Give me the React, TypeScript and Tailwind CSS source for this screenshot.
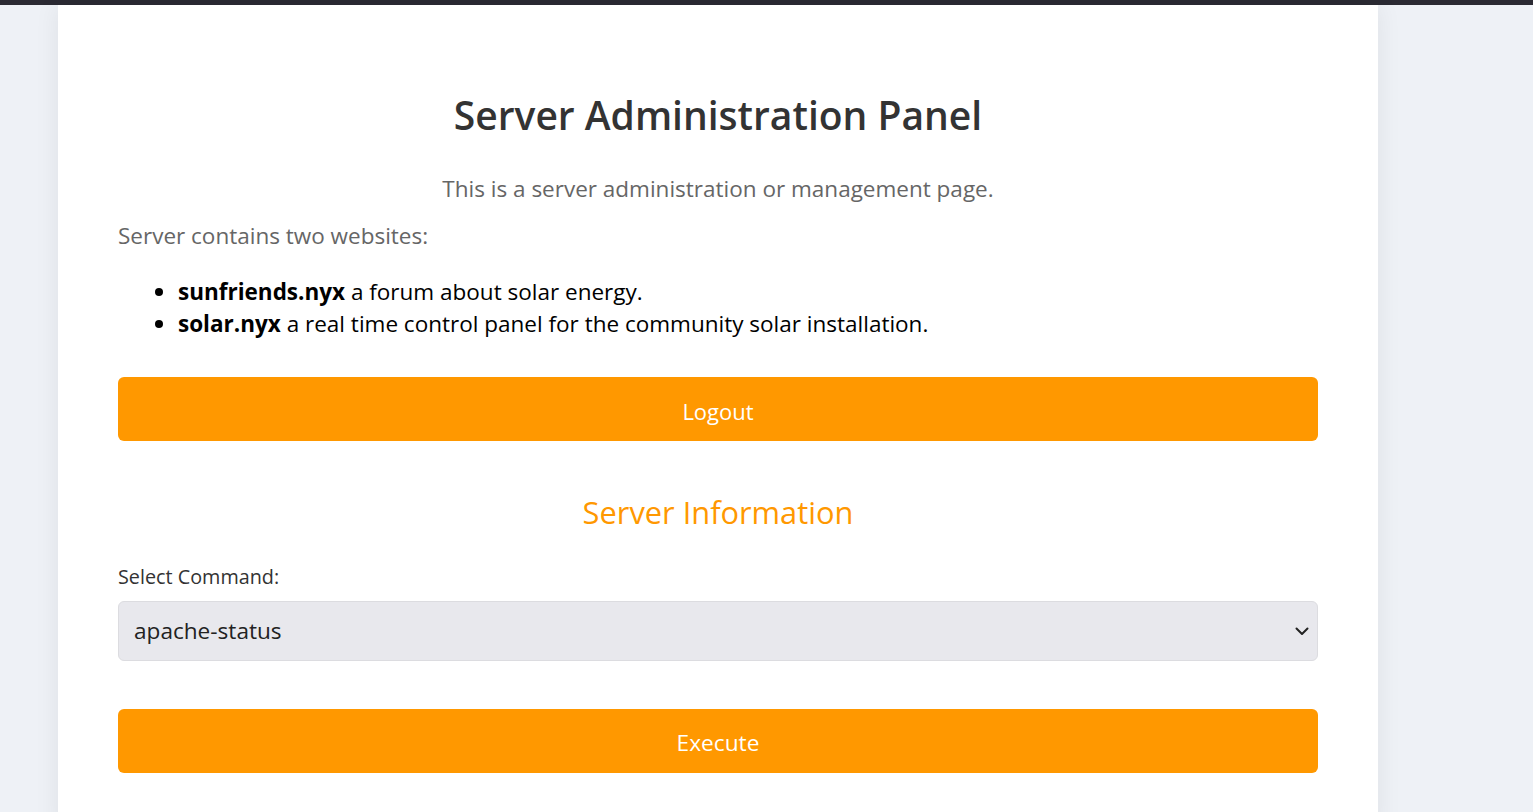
import React from "react";

export default function App() {
  return (
    <div className="min-h-screen bg-[#eef1f6]" style={{ fontFamily: '"Open Sans", "Noto Sans", sans-serif' }}>
      <div className="h-[5px] bg-[#2b2a33]" />
      <div className="ml-[58px] w-[1320px] bg-white px-[60px] pt-[86px] pb-[60px] shadow-[0_0_24px_rgba(0,0,0,0.07)] min-h-[807px]">
        <h1 className="text-center text-[39px] leading-[48px] font-semibold text-[#333333]">Server Administration Panel</h1>
        <p className="mt-[35px] text-center text-[22.5px] leading-[30px] text-[#666666]">This is a server administration or management page.</p>
        <p className="mt-[17px] text-[22.5px] leading-[30px] text-[#666666]">Server contains two websites:</p>
        <ul className="mt-[25px] list-disc pl-[60px] text-[22.5px] leading-[32px] text-black">
          <li><b className="font-bold">sunfriends.nyx</b> a forum about solar energy.</li>
          <li><b className="font-bold">solar.nyx</b> a real time control panel for the community solar installation.</li>
        </ul>
        <button className="mt-[37px] flex h-[64px] w-full items-center justify-center rounded-[6px] bg-[#ff9800] pt-[5px] text-[22px] text-white">Logout</button>
        <h2 className="mt-[51px] text-center text-[30.8px] leading-[40px] text-[#ff9800]">Server Information</h2>
        <label className="mt-[33px] block text-[19.8px] leading-[24px] text-[#333333]">Select Command:</label>
        <div className="mt-[12px] flex h-[60px] w-full items-center justify-between rounded-[6px] border border-[#dcdce0] bg-[#e8e8ed] pl-[15px] pr-[8px]">
          <span className="text-[22.6px] text-[#222222]">apache-status</span>
          <svg width="14" height="10" viewBox="0 0 14 10" fill="none">
            <path d="M1.5 2.5l5.5 5.5 5.5-5.5" stroke="#222" strokeWidth="2" strokeLinecap="round" strokeLinejoin="round" />
          </svg>
        </div>
        <button className="mt-[48px] flex h-[64px] w-full items-center justify-center rounded-[6px] bg-[#ff9800] pt-[4px] text-[22.7px] text-white">Execute</button>
      </div>
    </div>
  );
}
